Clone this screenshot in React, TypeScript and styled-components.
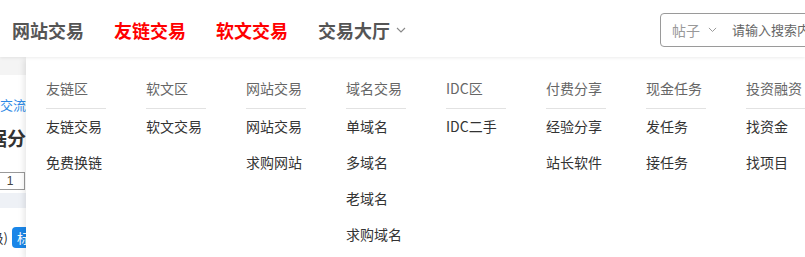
import React from 'react';
import styled, { createGlobalStyle } from 'styled-components';

const GlobalStyle = createGlobalStyle`
  html, body {
    margin: 0;
    padding: 0;
    background: #fff;
    font-family: "Liberation Sans", "Noto Sans CJK SC", sans-serif;
    overflow: hidden;
  }
`;

interface MenuColumn {
  title: string;
  items: string[];
}

const columns: MenuColumn[] = [
  { title: '友链区', items: ['友链交易', '免费换链'] },
  { title: '软文区', items: ['软文交易'] },
  { title: '网站交易', items: ['网站交易', '求购网站'] },
  { title: '域名交易', items: ['单域名', '多域名', '老域名', '求购域名'] },
  { title: 'IDC区', items: ['IDC二手'] },
  { title: '付费分享', items: ['经验分享', '站长软件'] },
  { title: '现金任务', items: ['发任务', '接任务'] },
  { title: '投资融资', items: ['找资金', '找项目'] },
];

const navItems = [
  { label: '网站交易', hot: false, drop: false },
  { label: '友链交易', hot: true, drop: false },
  { label: '软文交易', hot: true, drop: false },
  { label: '交易大厅', hot: false, drop: true },
];

const Page = styled.div`
  width: 805px;
  height: 257px;
  position: relative;
  overflow: hidden;
`;

const Header = styled.header`
  height: 57px;
  display: flex;
  align-items: center;
  padding-left: 12px;
  box-sizing: border-box;
  background: #fff;
  box-shadow: 0 1px 3px rgba(0, 0, 0, 0.08);
  position: relative;
  z-index: 2;
`;

const Nav = styled.nav`
  display: flex;
  align-items: center;
  gap: 30px;
  flex: 1;
`;

const NavItem = styled.a<{ $hot: boolean }>`
  display: flex;
  align-items: center;
  gap: 6px;
  font-family: "Noto Sans CJK SC", sans-serif;
  font-size: 18px;
  font-weight: 700;
  color: ${p => (p.$hot ? '#ff0000' : '#555')};
  text-decoration: none;
  line-height: 1;
  margin-top: 2px;
  white-space: nowrap;
`;

const Search = styled.div`
  width: 170px;
  height: 34px;
  margin-right: -25px;
  border: 1px solid #9a9a9a;
  border-radius: 4px;
  box-sizing: border-box;
  display: flex;
  align-items: center;
  padding-left: 11px;
  gap: 15px;
  flex-shrink: 0;
  margin-top: 2px;
`;

const SearchType = styled.span`
  display: flex;
  align-items: center;
  gap: 8px;
  font-family: "Noto Sans CJK SC", sans-serif;
  font-size: 14px;
  color: #999;
  white-space: nowrap;
`;

const SearchInput = styled.span`
  font-family: "Noto Sans CJK SC", sans-serif;
  font-size: 13px;
  color: #666;
  white-space: nowrap;
`;

const Behind = styled.div`
  display: flex;
  flex-direction: column;
  width: 26px;
  overflow: hidden;
  background: #fff;
`;

const Band = styled.div<{ $h: number; $bg: string }>`
  height: ${p => p.$h}px;
  background: ${p => p.$bg};
`;

const Row = styled.div<{ $h: number }>`
  height: ${p => p.$h}px;
  display: flex;
  align-items: center;
  justify-content: flex-end;
  white-space: nowrap;

  & > * {
    flex-shrink: 0;
  }
`;

const BlueText = styled.span`
  font-family: "Noto Sans CJK SC", sans-serif;
  font-size: 13px;
  color: #2e8ae6;
`;

const BoldText = styled.span`
  font-family: "Noto Sans CJK SC", sans-serif;
  font-size: 19px;
  font-weight: 700;
  color: #333;
`;

const NumBox = styled.span`
  display: flex;
  align-items: center;
  justify-content: center;
  width: 30px;
  height: 18px;
  margin-right: 1px;
  border: 1px solid #999;
  font-size: 12px;
  color: #444;
  box-sizing: border-box;
`;

const SmallText = styled.span`
  font-family: "Noto Sans CJK SC", sans-serif;
  font-size: 13px;
  color: #333;
`;

const BlueButton = styled.span`
  display: inline-flex;
  align-items: center;
  width: 14px;
  height: 21px;
  padding-left: 5px;
  box-sizing: border-box;
  overflow: hidden;
  margin-left: 4px;
  background: #1a86e8;
  border-radius: 4px 0 0 4px;
  color: #fff;
  font-family: "Noto Sans CJK SC", sans-serif;
  font-size: 13px;
`;

const Dropdown = styled.div`
  position: absolute;
  top: 57px;
  left: 26px;
  right: 0;
  bottom: 0;
  background: #fff;
  box-shadow: -2px 2px 6px rgba(0, 0, 0, 0.1);
  display: flex;
  padding: 20px 0 0 20px;
  z-index: 1;
`;

const Column = styled.div`
  width: 100px;
  flex-shrink: 0;
  display: flex;
  flex-direction: column;
`;

const ColTitle = styled.div`
  width: 60px;
  font-family: "Noto Sans CJK SC", sans-serif;
  font-size: 14px;
  line-height: 22px;
  color: #666;
  white-space: nowrap;
  padding-bottom: 9px;
  border-bottom: 1px solid #e2e2e2;
  margin-bottom: -1px;
`;

const ColItem = styled.a`
  font-family: "Noto Sans CJK SC", sans-serif;
  font-size: 14px;
  line-height: 36px;
  color: #333;
  text-decoration: none;
  white-space: nowrap;
`;

const Chevron = ({ size = 10, color = '#888' }: { size?: number; color?: string }) => (
  <svg width={size} height={size * 0.6} viewBox="0 0 10 6" fill="none">
    <path d="M1 1l4 4 4-4" stroke={color} strokeWidth="1.1" />
  </svg>
);

export default function App() {
  return (
    <Page>
      <GlobalStyle />
      <Header>
        <Nav>
          {navItems.map(n => (
            <NavItem key={n.label} $hot={n.hot}>
              {n.label}
              {n.drop && <Chevron size={10} color="#888" />}
            </NavItem>
          ))}
        </Nav>
        <Search>
          <SearchType>
            帖子
            <Chevron size={9} color="#999" />
          </SearchType>
          <SearchInput>请输入搜索内容</SearchInput>
        </Search>
      </Header>

      <Behind>
        <Band $h={18} $bg="#f4f4f4" />
        <Row $h={22} />
        <Row $h={14}>
          <BlueText>技术交流</BlueText>
        </Row>
        <Row $h={8} />
        <Row $h={36}>
          <BoldText>数据分</BoldText>
        </Row>
        <Row $h={17} />
        <Row $h={18}>
          <NumBox>1</NumBox>
        </Row>
        <Row $h={3} />
        <Band $h={15} $bg="#eef1f6" />
        <Row $h={19} />
        <Row $h={21}>
          <SmallText>级)</SmallText>
          <BlueButton>标</BlueButton>
        </Row>
      </Behind>

      <Dropdown>
        {columns.map(c => (
          <Column key={c.title}>
            <ColTitle>{c.title}</ColTitle>
            {c.items.map(i => (
              <ColItem key={i}>{i}</ColItem>
            ))}
          </Column>
        ))}
      </Dropdown>
    </Page>
  );
}
